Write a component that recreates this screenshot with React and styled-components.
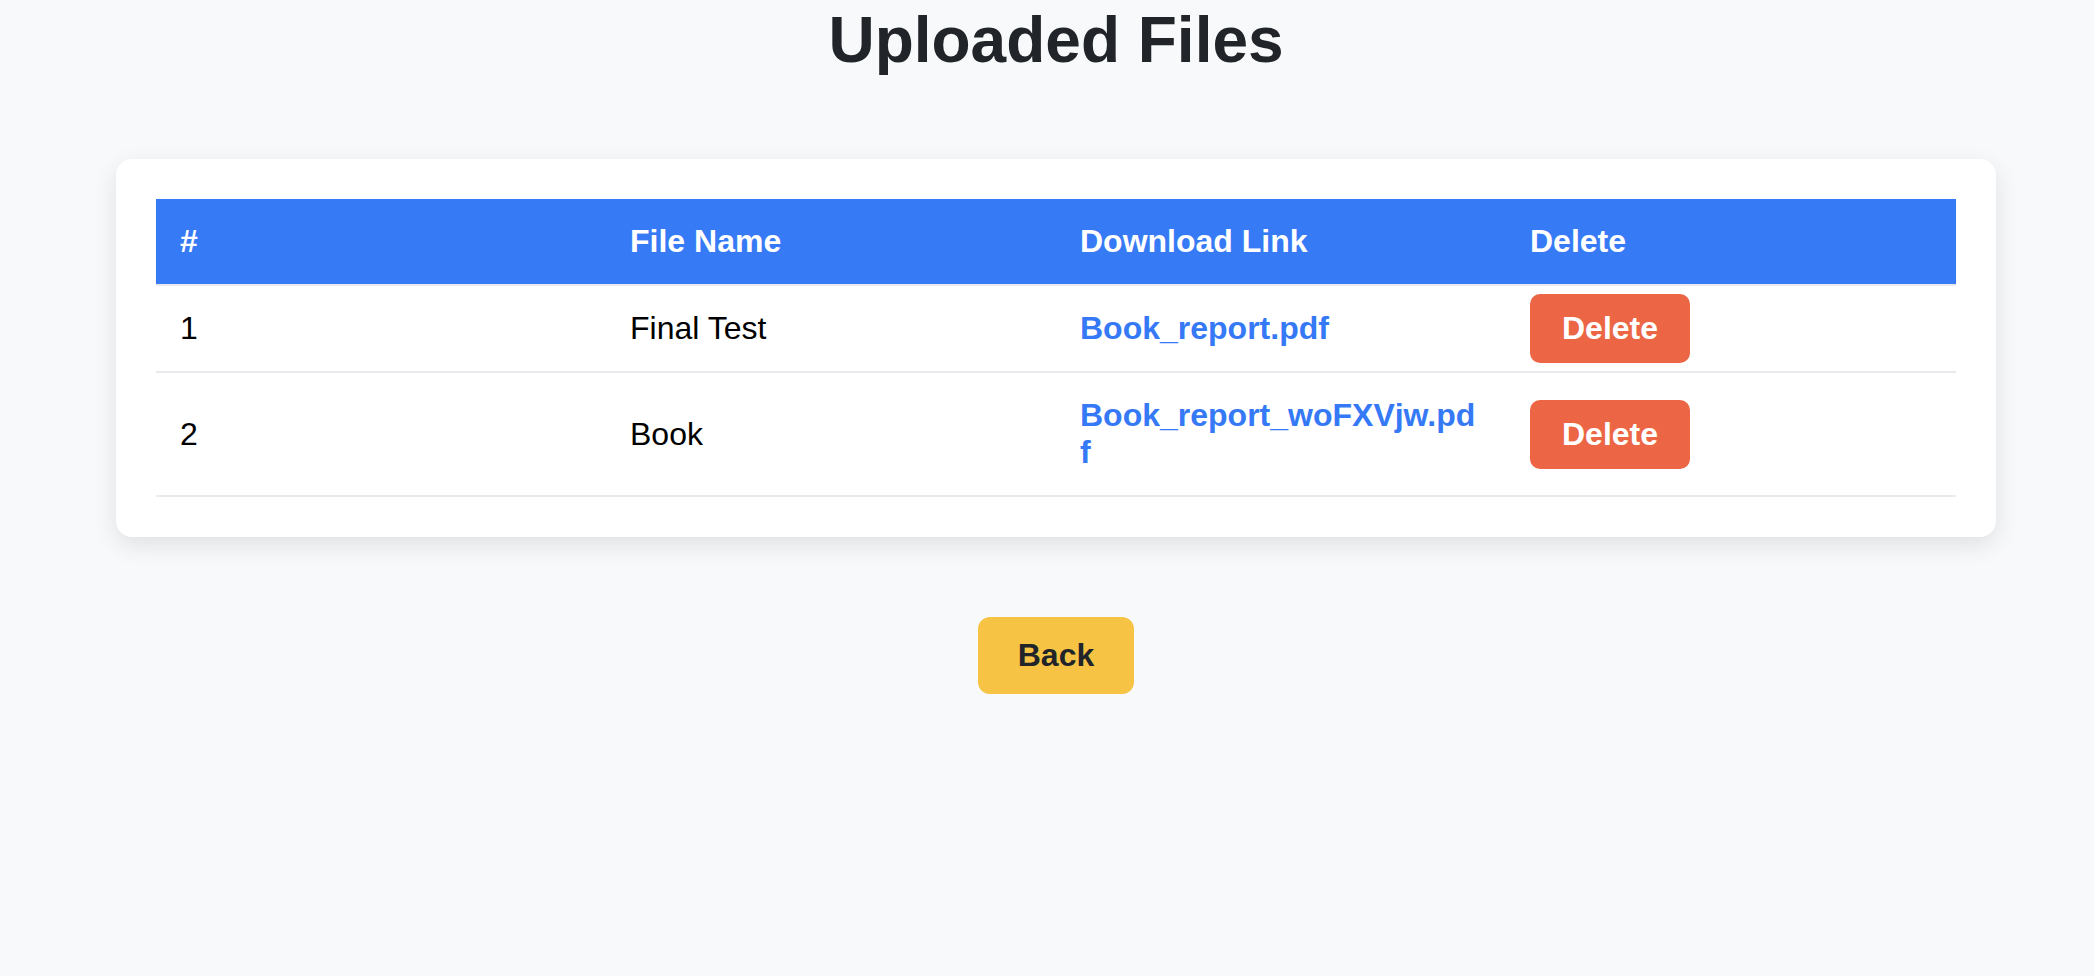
import styled, { createGlobalStyle } from "styled-components";

const GlobalStyle = createGlobalStyle`
  body {
    margin: 0;
    background-color: #f8f9fa;
    font-family: "Liberation Sans", Arial, Helvetica, sans-serif;
  }
`;

const Page = styled.div`
  min-height: 100vh;
  padding: 3px 0 40px 18px;
  box-sizing: border-box;
  display: flex;
  flex-direction: column;
  align-items: center;
`;

const Title = styled.h1`
  margin: 0 0 82px;
  font-size: 64px;
  line-height: 74px;
  font-weight: bold;
  color: #212529;
  text-align: center;
`;

const Card = styled.div`
  width: 1800px;
  padding: 40px;
  background-color: #fff;
  border-radius: 16px;
  box-shadow: 0 8px 24px rgba(0, 0, 0, 0.1);
`;

const Table = styled.table`
  width: 100%;
  table-layout: fixed;
  border-collapse: collapse;
  font-size: 32px;
`;

const HeadCell = styled.th`
  padding: 24px;
  background-color: #377af6;
  color: #fff;
  font-weight: bold;
  text-align: left;
  border-bottom: 2px solid #e9e9ee;
`;

const Cell = styled.td`
  padding: ${(p) => (p.$action ? "8px 24px" : "24px")};
  color: #000;
  text-align: left;
  vertical-align: middle;
  border-bottom: 2px solid #e9e9ee;
`;

const FileLink = styled.a`
  color: #3579f6;
  font-weight: bold;
  text-decoration: none;
  word-break: break-all;
  cursor: pointer;
`;

const DeleteButton = styled.button`
  padding: 16px 32px;
  border: none;
  border-radius: 10px;
  background-color: #ec6645;
  color: #fff;
  font-family: "Liberation Sans", Arial, Helvetica, sans-serif;
  font-size: 32px;
  font-weight: bold;
  line-height: normal;
  cursor: pointer;
  &:hover {
    opacity: 0.85;
  }
`;

const Footer = styled.div`
  margin-top: 80px;
  display: flex;
  justify-content: center;
`;

const BackButton = styled.button`
  padding: 20px 40px;
  border: none;
  border-radius: 12px;
  background-color: #f6c344;
  color: #212529;
  font-family: "Liberation Sans", Arial, Helvetica, sans-serif;
  font-size: 32px;
  font-weight: bold;
  line-height: normal;
  cursor: pointer;
  &:hover {
    opacity: 0.85;
  }
`;

const files = [
  { id: 1, name: "Final Test", file: "Book_report.pdf" },
  { id: 2, name: "Book", file: "Book_report_woFXVjw.pdf" },
];

const App = () => {
  return (
    <>
      <GlobalStyle />
      <Page>
        <Title>Uploaded Files</Title>
        <Card>
          <Table>
            <thead>
              <tr>
                <HeadCell>#</HeadCell>
                <HeadCell>File Name</HeadCell>
                <HeadCell>Download Link</HeadCell>
                <HeadCell>Delete</HeadCell>
              </tr>
            </thead>
            <tbody>
              {files.map((f, i) => (
                <tr key={f.id}>
                  <Cell>{i + 1}</Cell>
                  <Cell>{f.name}</Cell>
                  <Cell>
                    <FileLink href="#">{f.file}</FileLink>
                  </Cell>
                  <Cell $action>
                    <DeleteButton>Delete</DeleteButton>
                  </Cell>
                </tr>
              ))}
            </tbody>
          </Table>
        </Card>
        <Footer>
          <BackButton>Back</BackButton>
        </Footer>
      </Page>
    </>
  );
};

export default App;
